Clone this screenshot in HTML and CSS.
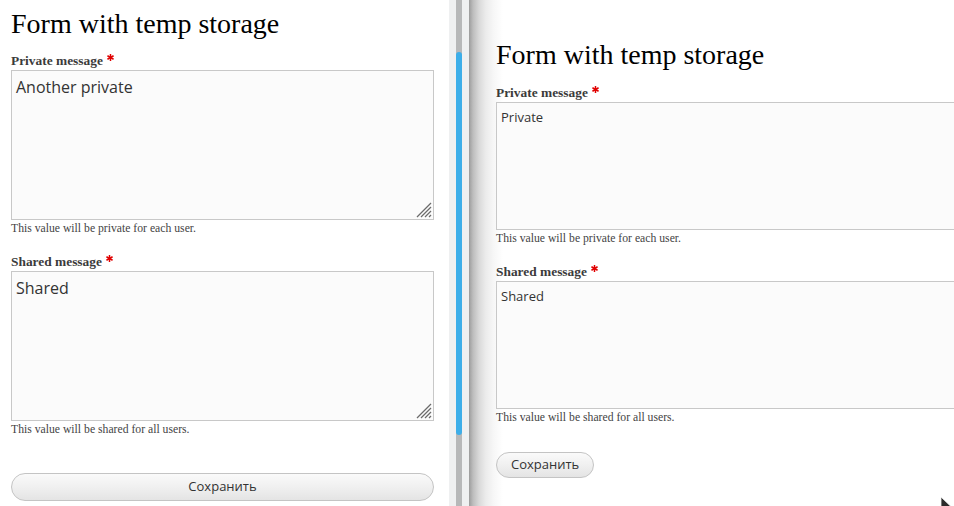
FILE: index.html
```html
<!DOCTYPE html>
<html lang="en">
<head>
<meta charset="utf-8">
<title>Form with temp storage</title>
<link rel="stylesheet" href="styles.css">
</head>
<body>
<div class="screen">
  <section class="pane pane-left">
    <h1 class="title">Form with temp storage</h1>
    <div class="field">
      <div class="label">Private message<svg class="req" viewBox="0 0 8 8" width="7" height="7"><g stroke="#e00000" stroke-width="1.7" stroke-linecap="butt"><line x1="4" y1="0" x2="4" y2="8"/><line x1="0.5" y1="2" x2="7.5" y2="6"/><line x1="0.5" y1="6" x2="7.5" y2="2"/></g></svg></div>
      <div class="textarea">Another private<svg class="grip" viewBox="0 0 16 16" width="16" height="16"><g stroke="#6b6b6b" stroke-width="1.3"><line x1="15" y1="1" x2="1" y2="15"/><line x1="15" y1="5" x2="5" y2="15"/><line x1="15" y1="9" x2="9" y2="15"/><line x1="15" y1="13" x2="13" y2="15"/></g></svg></div>
      <div class="desc">This value will be private for each user.</div>
    </div>
    <div class="field">
      <div class="label">Shared message<svg class="req" viewBox="0 0 8 8" width="7" height="7"><g stroke="#e00000" stroke-width="1.7"><line x1="4" y1="0" x2="4" y2="8"/><line x1="0.5" y1="2" x2="7.5" y2="6"/><line x1="0.5" y1="6" x2="7.5" y2="2"/></g></svg></div>
      <div class="textarea">Shared<svg class="grip" viewBox="0 0 16 16" width="16" height="16"><g stroke="#6b6b6b" stroke-width="1.3"><line x1="15" y1="1" x2="1" y2="15"/><line x1="15" y1="5" x2="5" y2="15"/><line x1="15" y1="9" x2="9" y2="15"/><line x1="15" y1="13" x2="13" y2="15"/></g></svg></div>
      <div class="desc">This value will be shared for all users.</div>
    </div>
    <div class="actions">
      <button class="button" type="button">Сохранить</button>
    </div>
  </section>
  <div class="scrollbar"><div class="groove"><div class="thumb"></div></div></div>
  <section class="pane pane-right">
    <h1 class="title">Form with temp storage</h1>
    <div class="field">
      <div class="label">Private message<svg class="req" viewBox="0 0 8 8" width="7" height="7"><g stroke="#e00000" stroke-width="1.7"><line x1="4" y1="0" x2="4" y2="8"/><line x1="0.5" y1="2" x2="7.5" y2="6"/><line x1="0.5" y1="6" x2="7.5" y2="2"/></g></svg></div>
      <div class="textarea">Private</div>
      <div class="desc">This value will be private for each user.</div>
    </div>
    <div class="field">
      <div class="label">Shared message<svg class="req" viewBox="0 0 8 8" width="7" height="7"><g stroke="#e00000" stroke-width="1.7"><line x1="4" y1="0" x2="4" y2="8"/><line x1="0.5" y1="2" x2="7.5" y2="6"/><line x1="0.5" y1="6" x2="7.5" y2="2"/></g></svg></div>
      <div class="textarea">Shared</div>
      <div class="desc">This value will be shared for all users.</div>
    </div>
    <div class="actions">
      <button class="button" type="button">Сохранить</button>
    </div>
  </section>
  <svg class="cursor" viewBox="0 0 14 20" width="14" height="20"><path d="M1 1 L1 16 L5 12.5 L8 19 L10.5 18 L7.5 11.5 L12 11.5 Z" fill="#2b2b2b" stroke="#f4f4f4" stroke-width="0.8"/></svg>
</div>
</body>
</html>
```

FILE: styles.css
```css
html, body {
  margin: 0;
  padding: 0;
  background: #fff;
}

body {
  width: 954px;
  height: 506px;
  overflow: hidden;
}

.screen {
  position: relative;
  display: flex;
  height: 506px;
  overflow: hidden;
}

.pane {
  box-sizing: border-box;
  height: 506px;
  overflow: hidden;
}

.pane-left {
  width: 449px;
  flex: none;
  padding: 8px 15px 0 11px;
  background: #fff;
}

.pane-right {
  flex: 1;
  min-width: 0;
  padding: 39px 0 0 27px;
  background: linear-gradient(to right, #9c9c9c 0, #bdbdbd 4px, #d9d9d9 10px, #ececec 17px, #f7f7f7 25px, #fff 34px);
}

.title {
  margin: 0 0 12px;
  font-family: "Liberation Serif", "Times New Roman", serif;
  font-size: 28px;
  line-height: 32px;
  font-weight: normal;
  color: #000;
  white-space: nowrap;
}

.pane-right .title {
  margin-bottom: 13px;
}

.field + .field {
  margin-top: 16px;
}

.label {
  font-family: "Liberation Serif", "Times New Roman", serif;
  font-weight: bold;
  font-size: 13.4px;
  line-height: 18px;
  color: #3b3b3b;
  white-space: nowrap;
}

.req {
  margin-left: 4px;
  vertical-align: 4px;
}

.textarea {
  position: relative;
  box-sizing: border-box;
  height: 150px;
  padding: 5px 4px;
  border: 1px solid #c8c8c8;
  background: #fbfbfb;
  font-family: "Open Sans", sans-serif;
  font-size: 16px;
  line-height: 22px;
  color: #333;
}

.pane-right .textarea {
  width: 560px;
  height: 128px;
  font-size: 13px;
  line-height: 18px;
  padding-top: 5px;
}

.grip {
  position: absolute;
  right: 1px;
  bottom: 1px;
}

.desc {
  margin-top: 1px;
  font-family: "Liberation Serif", "Times New Roman", serif;
  font-size: 11.7px;
  line-height: 16px;
  color: #444;
  white-space: nowrap;
}

.actions {
  margin-top: 35px;
}

.pane-right .actions {
  margin-top: 26px;
}

.button {
  display: block;
  box-sizing: border-box;
  width: 100%;
  height: 28px;
  margin: 0;
  padding: 0 14px 2px;
  border: 1px solid #c4c4c4;
  border-radius: 14px;
  background: linear-gradient(to bottom, #fafafa 0, #f0f0f0 50%, #e4e4e4 100%);
  font-family: "Open Sans", sans-serif;
  font-size: 13px;
  line-height: 23px;
  color: #333;
  text-align: center;
}

.pane-right .button {
  width: auto;
  height: 26px;
  line-height: 21px;
  border-radius: 13px;
}

.scrollbar {
  width: 20px;
  flex: none;
  box-sizing: border-box;
  padding: 0 7px;
  background: #eff0f1;
}

.groove {
  height: 100%;
  background: #b7b8b9;
  padding-top: 52px;
  box-sizing: border-box;
}

.thumb {
  height: 383px;
  border-radius: 3px;
  background: #3daee9;
}

.cursor {
  position: absolute;
  left: 940px;
  top: 496px;
}
```
